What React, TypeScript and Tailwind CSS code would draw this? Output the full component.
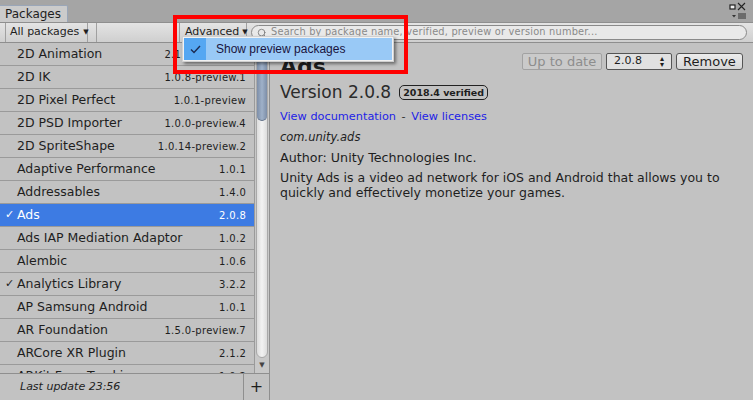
import { Search } from 'lucide-react';

type Pkg = { name: string; version: string; installed?: boolean; selected?: boolean };

const packages: Pkg[] = [
  { name: '2D Animation', version: '2.1.0-preview.4' },
  { name: '2D IK', version: '1.0.8-preview.1' },
  { name: '2D Pixel Perfect', version: '1.0.1-preview' },
  { name: '2D PSD Importer', version: '1.0.0-preview.4' },
  { name: '2D SpriteShape', version: '1.0.14-preview.2' },
  { name: 'Adaptive Performance', version: '1.0.1' },
  { name: 'Addressables', version: '1.4.0' },
  { name: 'Ads', version: '2.0.8', installed: true, selected: true },
  { name: 'Ads IAP Mediation Adaptor', version: '1.0.2' },
  { name: 'Alembic', version: '1.0.6' },
  { name: 'Analytics Library', version: '3.2.2', installed: true },
  { name: 'AP Samsung Android', version: '1.0.1' },
  { name: 'AR Foundation', version: '1.5.0-preview.7' },
  { name: 'ARCore XR Plugin', version: '2.1.2' },
  { name: 'ARKit Face Tracking', version: '1.0.2' },
];

function Row({ pkg }: { pkg: Pkg }) {
  return (
    <div
      className={
        'h-[23px] shrink-0 flex items-center border-b border-[#9a9a9a] pr-[8px] whitespace-nowrap ' +
        (pkg.selected ? 'bg-[#3d7be3] text-white' : 'text-[#1e1e1e]')
      }
    >
      <span className="w-[17px] text-[11px] text-center pl-[2px]">{pkg.installed ? '✓' : ''}</span>
      <span className="flex-1 text-[12.5px]">{pkg.name}</span>
      <span className="text-[10px] tracking-[0.3px]">{pkg.version}</span>
    </div>
  );
}

export default function App() {
  return (
    <div
      className="relative w-[753px] h-[400px] overflow-hidden bg-[#c2c2c2] flex flex-col text-[#1e1e1e]"
      style={{ fontFamily: '"DejaVu Sans", Verdana, sans-serif' }}
    >
      {/* tab strip */}
      <div className="h-[23px] shrink-0 bg-[#a5a5a5] flex items-end border-b border-[#8f8f8f] relative">
        <div className="h-[17px] w-[68px] bg-[#cbcbcb] border-t border-r border-[#9aa6b8] rounded-tr-[2px] text-[12px] pl-[5px] leading-[17px] text-[#1e1e1e]">
          Packages
        </div>
        <div className="absolute right-[6px] top-[2px] flex flex-col items-end">
          <svg width="22" height="10" viewBox="0 0 22 10">
            <rect x="5" y="3" width="5" height="4" fill="#f0f0f0" stroke="#222" strokeWidth="1.2" />
            <path d="M13 1 L20 8 M20 1 L13 8" stroke="#222" strokeWidth="1.1" />
          </svg>
          <svg width="16" height="6" viewBox="0 0 16 6" className="mt-[1px]">
            <path d="M1 2 L5 2 L3 4.5 Z" fill="#333" />
            <path d="M7 1 H15 M7 3 H15 M7 5 H15" stroke="#333" strokeWidth="1" />
          </svg>
        </div>
      </div>

      {/* toolbar */}
      <div className="h-[20px] shrink-0 bg-gradient-to-b from-[#e4e4e4] to-[#cfcfcf] border-b border-[#8e8e8e] flex items-center text-[11px] whitespace-nowrap">
        <div className="w-[6px] h-full border-r border-[#a0a0a0]" />
        <div className="w-[82px] h-full border-r border-[#a0a0a0] flex items-center pl-[4px] gap-[4px]">
          All packages <span className="text-[7px]">▼</span>
        </div>
        <div className="w-[9px] h-full border-r border-[#a0a0a0]" />
        <div className="w-[83px] h-full border-r border-[#a0a0a0]" />
        <div className="w-[67px] h-full border-r border-[#a0a0a0] flex items-center pl-[5px] gap-[3px]">
          Advanced <span className="text-[7px]">▼</span>
        </div>
        <div className="flex-1 pl-[4px] pr-[6px]">
          <div className="h-[15px] rounded-full border border-[#8a8a8a] bg-[#e9e9e9] flex items-center pl-[5px] gap-[4px] text-[#8a8a8a] text-[9.8px]">
            <Search size={10} strokeWidth={2} className="text-[#777]" />
            <span className="tracking-[0.2px]">Search by package name, verified, preview or version number...</span>
          </div>
        </div>
      </div>

      {/* body */}
      <div className="flex flex-1 min-h-0">
        {/* left column */}
        <div className="w-[270px] shrink-0 flex flex-col border-r border-[#8f8f8f]">
          <div className="flex flex-1 min-h-0">
            <div className="w-[255px] flex flex-col overflow-hidden">
              {packages.map((p) => (
                <Row key={p.name} pkg={p} />
              ))}
            </div>
            {/* scrollbar */}
            <div className="w-[15px] bg-[#c8c8c8] border-l border-[#9a9a9a] flex flex-col">
              <div className="flex-1 mx-[1px] mt-[1px] rounded-b-[7px] bg-gradient-to-r from-[#dcdcdc] via-[#f2f2f2] to-[#dcdcdc] border border-[#a9a9a9] flex flex-col">
                <div className="h-[76px] rounded-b-[7px] bg-gradient-to-r from-[#7d8ea8] via-[#9fb1c9] to-[#7d8ea8] border-b border-[#5e6e86]" />
              </div>
              <div className="h-[15px] flex items-center justify-center">
                <span className="text-[7px] text-[#444]">▼</span>
              </div>
            </div>
          </div>
          {/* footer */}
          <div className="h-[27px] shrink-0 border-t border-[#8f8f8f] flex items-center">
            <span className="flex-1 pl-[20px] text-[11px] italic">Last update 23:56</span>
            <span className="w-[26px] h-full border-l border-[#8f8f8f] flex items-center justify-center text-[16px]">+</span>
          </div>
        </div>

        {/* details */}
        <div className="flex-1 pl-[10px] pr-[6px] pt-[9px] flex flex-col">
          <div className="flex items-start justify-between pr-[4px]">
            <div className="text-[22px] font-bold leading-[24px] mt-[3px]">Ads</div>
            <div className="flex items-center gap-[4px] text-[12px] mt-[1px]">
              <div className="h-[17px] w-[80px] border border-[#a2a2a2] rounded-[2px] bg-[#cacaca] text-[#8d8d8d] flex items-center justify-center text-[13px]">
                Up to date
              </div>
              <div className="h-[17px] w-[66px] border border-[#555] rounded-[2px] bg-[#e1e1e1] flex items-center justify-between px-[7px] text-[11px]">
                2.0.8 <span className="text-[8px] leading-[6px] flex flex-col"><span>▴</span><span>▾</span></span>
              </div>
              <div className="h-[17px] w-[67px] border border-[#555] rounded-[3px] bg-gradient-to-b from-[#ececec] to-[#d6d6d6] flex items-center justify-center text-[13px]">
                Remove
              </div>
            </div>
          </div>
          <div className="flex items-center mt-[1px] gap-[8px]">
            <span className="text-[17px] text-[#2b2b2b]">Version 2.0.8</span>
            <span className="text-[9.5px] font-bold border border-[#222] rounded-[5px] px-[3px] leading-[13px]">
              2018.4 verified
            </span>
          </div>
          <div className="text-[11.3px] mt-[3px] text-[#2323e6]">
            View documentation <span className="text-[#333] mx-[2px]">-</span> View licenses
          </div>
          <div className="text-[11.5px] italic mt-[4px]">com.unity.ads</div>
          <div className="text-[12.7px] mt-[1px]">Author: Unity Technologies Inc.</div>
          <div className="text-[12.5px] mt-[3px] leading-[15px]">
            Unity Ads is a video ad network for iOS and Android that allows you to quickly and effectively monetize your
            games.
          </div>
        </div>
      </div>

      {/* dropdown menu */}
      <div className="absolute left-[182px] top-[36px] w-[212px] h-[26px] bg-[#f2f2f2] p-[1px] shadow-[2px_2px_3px_rgba(0,0,0,0.45)] border border-[#d0d0d0]">
        <div className="flex h-full">
          <div className="w-[22px] bg-[#55a7f2] flex items-center justify-center">
            <svg width="11" height="9" viewBox="0 0 11 9">
              <path d="M1 4.5 L4 7.5 L10 1" stroke="#1c2a50" strokeWidth="1.4" fill="none" />
            </svg>
          </div>
          <div
            className="flex-1 bg-[#99c9f6] flex items-center pl-[10px] text-[12px] text-[#1a1440]"
            style={{ fontFamily: '"Liberation Sans", Arial, sans-serif' }}
          >
            Show preview packages
          </div>
        </div>
      </div>

      {/* highlight box */}
      <div className="absolute left-[173px] top-[15px] w-[235px] h-[59px] border-[4px] border-[#ff0000]" />
    </div>
  );
}
